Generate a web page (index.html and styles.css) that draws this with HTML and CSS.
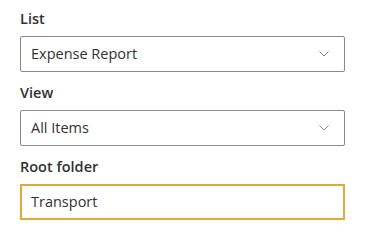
FILE: index.html
```html
<!DOCTYPE html>
<html>
<head>
<meta charset="utf-8">
<link rel="stylesheet" href="styles.css">
</head>
<body>
<div class="form">
  <div class="field">
    <label class="label">List</label>
    <div class="dropdown">
      <span class="value">Expense Report</span>
      <svg class="chev" width="10" height="6" viewBox="0 0 10 6"><path d="M0.5 0.5 L5 5 L9.5 0.5" fill="none" stroke="#8a8886" stroke-width="1"/></svg>
    </div>
  </div>
  <div class="field">
    <label class="label">View</label>
    <div class="dropdown">
      <span class="value">All Items</span>
      <svg class="chev" width="10" height="6" viewBox="0 0 10 6"><path d="M0.5 0.5 L5 5 L9.5 0.5" fill="none" stroke="#8a8886" stroke-width="1"/></svg>
    </div>
  </div>
  <div class="field">
    <label class="label">Root folder</label>
    <div class="textbox focused">
      <span class="value">Transport</span>
    </div>
  </div>
</div>
</body>
</html>
```
FILE: styles.css
```css
html, body {
  margin: 0;
  padding: 0;
  background: #ffffff;
}
body {
  font-family: "Open Sans", "Noto Sans", sans-serif;
  color: #323130;
}
.form {
  padding: 2px 23px 0 20px;
  display: flex;
  flex-direction: column;
  gap: 4px;
}
.field {
  display: flex;
  flex-direction: column;
}
.label {
  font-size: 14.5px;
  font-weight: 600;
  line-height: 22px;
  padding: 6px 0 6px;
  color: #323130;
}
.dropdown, .textbox {
  box-sizing: border-box;
  height: 36px;
  border: 1px solid #8a8886;
  border-radius: 2px;
  display: flex;
  align-items: center;
  justify-content: space-between;
  padding: 0 15px 0 10px;
}
.textbox.focused {
  border: 2px solid #e0a93a;
  border-radius: 0;
  padding-left: 9px;
}
.value {
  font-size: 14.5px;
  color: #323130;
  line-height: 20px;
}
.chev {
  display: block;
}
```
